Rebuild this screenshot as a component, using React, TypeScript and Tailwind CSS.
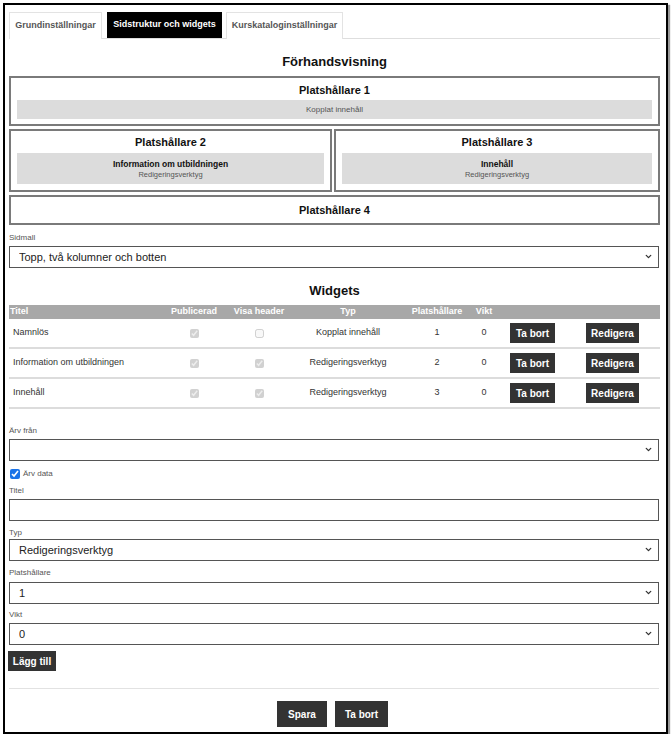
import { ChevronDown } from "lucide-react";

const widgets = [
  { title: "Namnlös", published: true, header: false, type: "Kopplat innehåll", slot: 1, weight: 0 },
  { title: "Information om utbildningen", published: true, header: true, type: "Redigeringsverktyg", slot: 2, weight: 0 },
  { title: "Innehåll", published: true, header: true, type: "Redigeringsverktyg", slot: 3, weight: 0 },
];

function Label(props: { text: string; className?: string }) {
  return <div className={"h-[12px] leading-[12px] text-[8px] text-[#555] " + (props.className ?? "")}>{props.text}</div>;
}

function Select(props: { value: string; className?: string }) {
  return (
    <div className={"relative h-[22px] w-[650px] " + (props.className ?? "")}>
      <select
        className="appearance-none block w-full h-full border border-[#555] bg-white pl-[9px] text-[11px] text-[#222] outline-none"
        defaultValue={props.value}
      >
        <option value={props.value}>{props.value}</option>
      </select>
      <ChevronDown size={9} strokeWidth={3.5} className="absolute right-[6px] top-[6px] text-[#333] pointer-events-none" />
    </div>
  );
}

function DarkButton(props: { text: string; className?: string }) {
  return (
    <button className={"bg-[#333] text-white font-bold text-[10px] flex items-center justify-center " + (props.className ?? "")}>
      {props.text}
    </button>
  );
}

export default function App() {
  return (
    <div className="font-['Liberation_Sans',Arial,sans-serif] text-[#111]">
      <div className="ml-[3px] mt-[3px] w-[665px] h-[731px] border-2 border-black shadow-[2px_2px_1px_#9a9a9a] pl-[4px] pr-[6px] pt-[7px]">
        {/* tabs */}
        <div className="flex gap-[4px] border-b border-[#dedede] h-[27px]">
          <div className="w-[93px] h-[27px] border border-b-0 border-[#e3e3e3] bg-white flex items-center justify-center text-[9px] font-bold text-[#555]">Grundinställningar</div>
          <div className="w-[115px] h-[26px] ml-[1px] bg-black flex items-center justify-center text-[9px] font-bold text-white">Sidstruktur och widgets</div>
          <div className="w-[117px] h-[27px] border border-b-0 border-[#e3e3e3] bg-white flex items-center justify-center text-[9px] font-bold text-[#555]">Kurskataloginställningar</div>
        </div>

        <h2 className="mt-[15px] h-[16px] leading-[16px] text-center text-[13px] font-bold">Förhandsvisning</h2>

        {/* preview */}
        <div className="mt-[6px] border-2 border-[#7a7a7a] px-[6px] pt-[5px] pb-[5px]">
          <div className="h-[14px] leading-[14px] text-center text-[11px] font-bold">Platshållare 1</div>
          <div className="mt-[3px] h-[19px] bg-[#dcdcdc] flex items-center justify-center text-[8px] text-[#555]">Kopplat innehåll</div>
        </div>
        <div className="mt-[3px] flex gap-[2px]">
          <div className="w-[323px] border-2 border-[#7a7a7a] px-[6px] pt-[4px] pb-[6px]">
            <div className="h-[14px] leading-[14px] text-center text-[11px] font-bold">Platshållare 2</div>
            <div className="mt-[4px] h-[31px] bg-[#dcdcdc] flex flex-col items-center justify-center">
              <div className="text-[8.5px] font-bold leading-[11px]">Information om utbildningen</div>
              <div className="text-[7.5px] text-[#555] leading-[9px]">Redigeringsverktyg</div>
            </div>
          </div>
          <div className="flex-1 border-2 border-[#7a7a7a] px-[6px] pt-[4px] pb-[6px]">
            <div className="h-[14px] leading-[14px] text-center text-[11px] font-bold">Platshållare 3</div>
            <div className="mt-[4px] h-[31px] bg-[#dcdcdc] flex flex-col items-center justify-center">
              <div className="text-[8.5px] font-bold leading-[11px]">Innehåll</div>
              <div className="text-[7.5px] text-[#555] leading-[9px]">Redigeringsverktyg</div>
            </div>
          </div>
        </div>
        <div className="mt-[3px] h-[30px] border-2 border-[#7a7a7a] flex items-center justify-center text-[11px] font-bold">
          Platshållare 4
        </div>

        <Label text="Sidmall" className="mt-[7px]" />
        <Select value="Topp, två kolumner och botten" className="mt-[2px]" />

        <h2 className="mt-[15px] h-[16px] leading-[16px] text-center text-[13px] font-bold">Widgets</h2>

        {/* widgets table */}
        <div className="mt-[6px] text-[9px]">
          <div className="grid grid-cols-[151px_68px_62px_116px_62px_32px_65px_95px] h-[14px] items-center bg-[#a8a8a8] text-white font-bold">
            <div className="pl-[1px]">Titel</div>
            <div className="text-center">Publicerad</div>
            <div className="text-center">Visa header</div>
            <div className="text-center">Typ</div>
            <div className="text-center">Platshållare</div>
            <div className="text-center">Vikt</div>
            <div></div>
            <div></div>
          </div>
          {widgets.map((w, i) => (
            <div
              key={i}
              className="grid grid-cols-[151px_68px_62px_116px_62px_32px_65px_95px] h-[30px] items-center border-b-2 border-[#dcdcdc] text-[#333]"
            >
              <div className="pl-[4px]">{w.title}</div>
              <div className="flex justify-center">
                <input type="checkbox" disabled defaultChecked={w.published} className="w-[9px] h-[9px] m-0" />
              </div>
              <div className="flex justify-center">
                <input type="checkbox" disabled defaultChecked={w.header} className="w-[9px] h-[9px] m-0" />
              </div>
              <div className="text-center">{w.type}</div>
              <div className="text-center">{w.slot}</div>
              <div className="text-center">{w.weight}</div>
              <div className="flex justify-center">
                <DarkButton text="Ta bort" className="w-[45px] h-[20px]" />
              </div>
              <div className="flex justify-center">
                <DarkButton text="Redigera" className="w-[53px] h-[20px]" />
              </div>
            </div>
          ))}
        </div>

        {/* form */}
        <Label text="Ärv från" className="mt-[16px]" />
        <Select value="" className="mt-[2px]" />

        <div className="mt-[7px] h-[12px] flex items-center gap-[3px] text-[8px] text-[#555]">
          <input type="checkbox" defaultChecked className="w-[10px] h-[10px] m-0 ml-[1px] accent-[#1a73e8]" />
          <span>Ärv data</span>
        </div>

        <Label text="Titel" className="mt-[5px]" />
        <input type="text" className="mt-[2px] block h-[22px] w-[650px] border border-[#555] bg-white outline-none" />

        <Label text="Typ" className="mt-[6px]" />
        <Select value="Redigeringsverktyg" className="mt-[0px]" />

        <Label text="Platshållare" className="mt-[6px]" />
        <Select value="1" className="mt-[3px]" />

        <Label text="Vikt" className="mt-[5px]" />
        <Select value="0" className="mt-[2px]" />

        <DarkButton text="Lägg till" className="mt-[6px] -ml-[1px] w-[48px] h-[20px]" />

        <div className="mt-[17px] border-t border-[#e2e2e2] w-[650px]"></div>

        <div className="mt-[12px] flex justify-center gap-[8px] pr-[4px]">
          <DarkButton text="Spara" className="w-[50px] h-[26px]" />
          <DarkButton text="Ta bort" className="w-[53px] h-[26px]" />
        </div>
      </div>
    </div>
  );
}
